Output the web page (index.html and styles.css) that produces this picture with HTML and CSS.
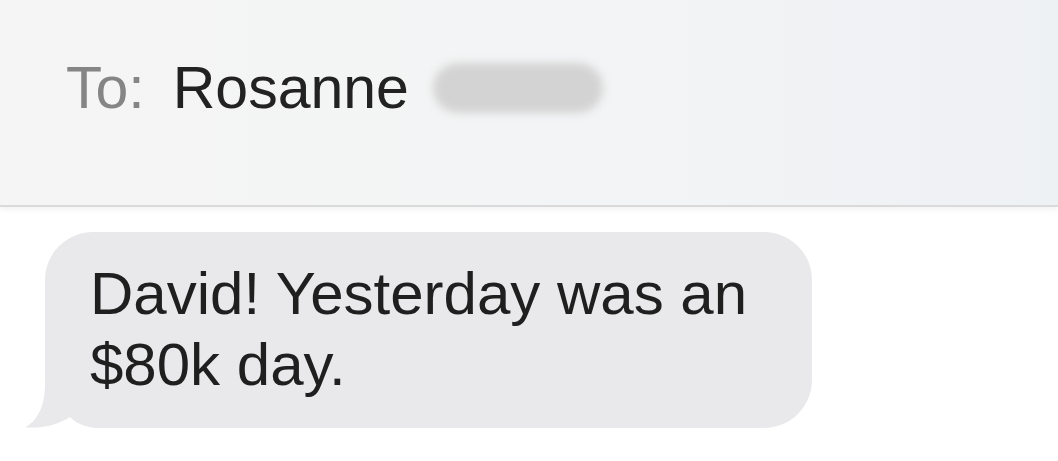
FILE: index.html
```html
<!DOCTYPE html>
<html lang="en">
<head>
  <meta charset="UTF-8">
  <meta name="viewport" content="width=device-width, initial-scale=1.0">
  <title>Messages</title>
  <link rel="stylesheet" href="styles.css">
</head>
<body>
  <div class="header">
    <div class="to-line">
      <span class="to-label">To:</span>
      <span class="to-name">Rosanne</span>
      <span class="blurred"></span>
    </div>
  </div>

  <div class="thread">
    <div class="bubble">
      David! Yesterday was an $80k day.
      <!-- хвостик пузыря -->
      <svg class="tail" viewBox="0 0 80 50">
        <path d="M25,4 C25,27 17,41 5,47.5 C22,49 38,45 50,37 L50,4 Z" fill="#e9e9eb"></path>
        <path d="M5,47.5 C22,49 38,45 50,37 C56,43 64,47 78,48.5 L80,50 L0,50 Z" fill="#fff"></path>
      </svg>
    </div>
  </div>
</body>
</html>
```

FILE: styles.css
```css
body {
  font-family: "Liberation Sans", Arial, sans-serif;
  margin: 0;
  background-color: #fff;
  color: #222;
}
.header {
  height: 207px;
  background: linear-gradient(90deg, #f5f5f5 0%, #f3f4f5 55%, #eef1f4 100%);
  border-bottom: 2px solid #dadada;
  box-shadow: 0 3px 6px rgba(0, 0, 0, 0.05);
  padding: 54px 0 0 66px;
  box-sizing: border-box;
}
.to-line {
  display: flex;
  align-items: center;
  font-size: 59px;
}
.to-label {
  color: #858585;
  margin-right: 28px;
}
.to-name {
  color: #222;
}
.blurred {
  display: inline-block;
  width: 170px;
  height: 50px;
  margin-left: 24px;
  border-radius: 25px;
  background: #d3d3d3;
  filter: blur(4px);
}
.thread {
  padding: 25px 0 0 45px;
}
.bubble {
  position: relative;
  width: 767px;
  box-sizing: border-box;
  padding: 26px 40px 28px 45px;
  background-color: #e9e9eb;
  border-radius: 48px;
  font-size: 60px;
  line-height: 71px;
  color: #1f1f1f;
}
.tail {
  position: absolute;
  left: -25px;
  bottom: -2px;
  width: 80px;
  height: 50px;
}
```
